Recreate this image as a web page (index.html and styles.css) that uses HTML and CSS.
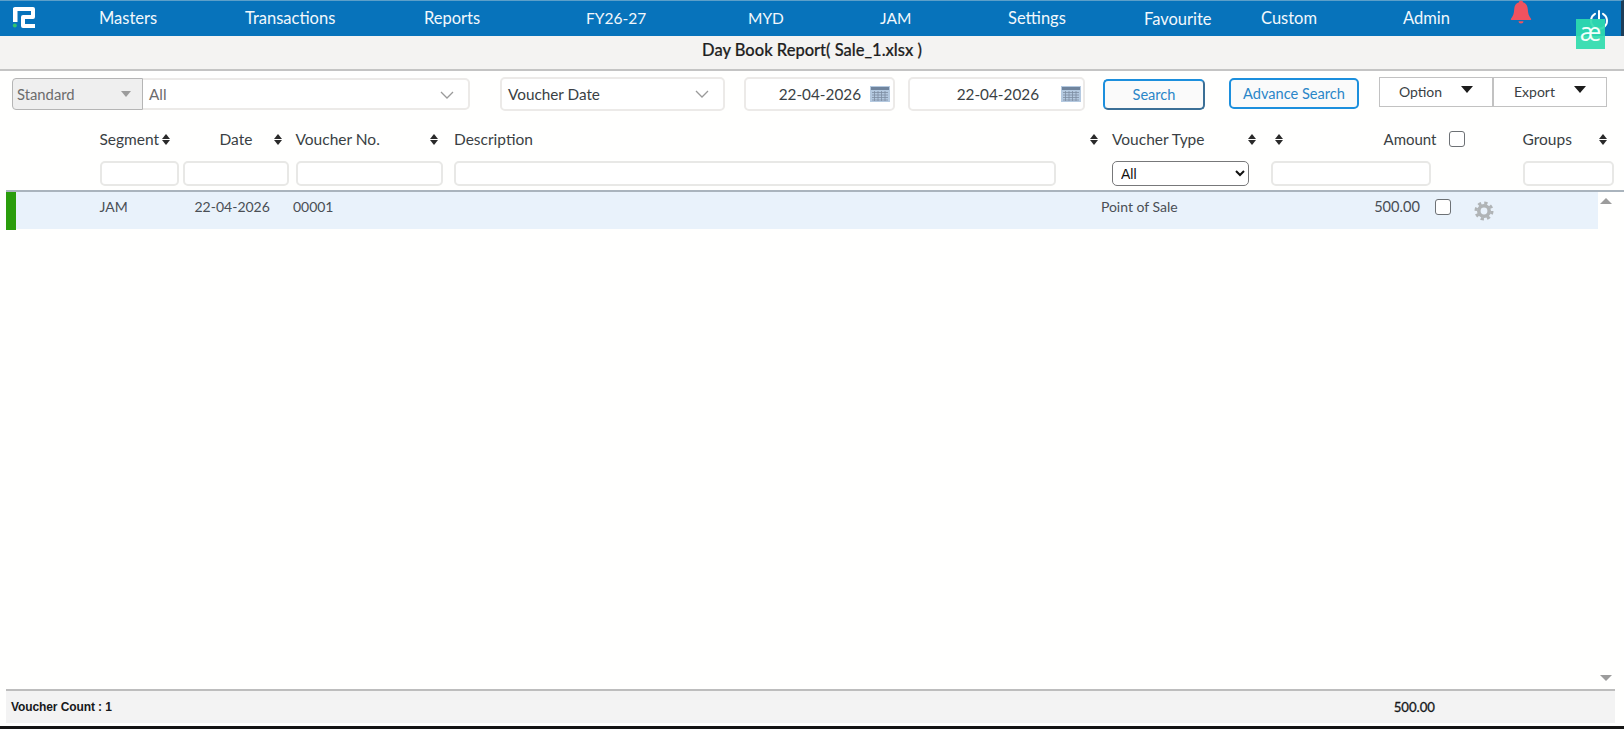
FILE: index.html
```html
<!DOCTYPE html>
<html lang="en">
<head>
    <meta charset="UTF-8">
    <title>Day Book Report</title>
    <link rel="stylesheet" href="styles.css">
</head>
<body>
    <div class="page">
        <nav class="topnav">
            <a class="topnav__logo" href="#">
                <svg width="24" height="24" viewBox="0 0 24 24">
                    <path d="M3 15V3H21V11H11V20H23" fill="none" stroke="#fff" stroke-width="4" stroke-linejoin="round"/>
                    <path d="M1 2H5.500V16H1z" fill="#fff"/>
                    <circle cx="2.800" cy="19.400" r="2" fill="#2fc46f"/>
                </svg>
            </a>
            <a class="topnav__item" href="#">Masters</a>
            <a class="topnav__item" href="#">Transactions</a>
            <a class="topnav__item" href="#">Reports</a>
            <a class="topnav__item topnav__item--caps" href="#">FY26-27</a>
            <a class="topnav__item topnav__item--caps" href="#">MYD</a>
            <a class="topnav__item topnav__item--caps" href="#">JAM</a>
            <a class="topnav__item" href="#">Settings</a>
            <a class="topnav__item topnav__item--low" href="#">Favourite</a>
            <a class="topnav__item" href="#">Custom</a>
            <a class="topnav__item" href="#">Admin</a>
            <span class="topnav__bell">
                <svg width="24" height="24" viewBox="0 0 24 24">
                    <path d="M12 0.5c1.2 0 2 .8 2 1.8 3.2.9 4.6 3.6 4.8 7 .2 4 .9 6.6 3.2 9.4.5.7.2 1.3-.6 1.3H2.600c-.8 0-1.100-.6-.6-1.300 2.300-2.800 3-5.400 3.200-9.400.2-3.400 1.600-6.100 4.800-7 0-1 .8-1.800 2-1.800z" fill="#f0525f"/>
                    <path d="M9.500 21.200h5a2.500 2.300 0 0 1-5 0z" fill="#f0525f"/>
                </svg>
            </span>
            <span class="topnav__power">
                <svg width="20" height="20" viewBox="0 0 20 20" fill="none" stroke="#fff" stroke-width="2" stroke-linecap="round">
                    <path d="M6 3.800a8 8 0 1 0 8 0"/>
                    <path d="M10 1v8"/>
                </svg>
            </span>
            <span class="ae-badge">æ</span>
        </nav>

        <div class="titlebar">Day Book Report( Sale_1.xlsx )</div>

        <div class="filters">
            <div class="picker picker--standard">Standard<i class="tri tri--grey"></i></div>
            <div class="picker picker--all">All
                <svg class="chev" width="14" height="8" viewBox="0 0 14 8"><path d="M1 1l6 6 6-6" fill="none" stroke="#9a9a9a" stroke-width="1.300"/></svg>
            </div>
            <div class="picker picker--date">Voucher Date
                <svg class="chev" width="14" height="8" viewBox="0 0 14 8"><path d="M1 1l6 6 6-6" fill="none" stroke="#9a9a9a" stroke-width="1.300"/></svg>
            </div>
            <div class="datebox datebox--from">22-04-2026
                <svg class="cal" width="20" height="16" viewBox="0 0 20 16">
                    <rect width="20" height="16" fill="#b4c9e0"/>
                    <rect x="1" y="1" width="18" height="3" fill="#6f849d"/>
                    <path d="M2 6.500H18M2 9H18M2 11.500H18M2 14H18M4.500 5V15M8 5V15M11.500 5V15M15 5V15" stroke="#7d8ea2" stroke-width=".8"/>
                </svg>
            </div>
            <div class="datebox datebox--to">22-04-2026
                <svg class="cal" width="20" height="16" viewBox="0 0 20 16">
                    <rect width="20" height="16" fill="#b4c9e0"/>
                    <rect x="1" y="1" width="18" height="3" fill="#6f849d"/>
                    <path d="M2 6.500H18M2 9H18M2 11.500H18M2 14H18M4.500 5V15M8 5V15M11.500 5V15M15 5V15" stroke="#7d8ea2" stroke-width=".8"/>
                </svg>
            </div>
            <button class="btn btn--search">Search</button>
            <button class="btn btn--advance">Advance Search</button>
            <div class="menu-group">
                <button class="menu-btn">Option<i class="tri"></i></button>
                <button class="menu-btn">Export<i class="tri"></i></button>
            </div>
        </div>

        <div class="grid-head">
            <div class="col col--segment">Segment<i class="sort"></i></div>
            <div class="col col--date"><span class="col__label">Date</span><i class="sort"></i></div>
            <div class="col col--number">Voucher No.<i class="sort"></i></div>
            <div class="col col--desc">Description<i class="sort"></i></div>
            <div class="col col--type">Voucher Type<i class="sort"></i></div>
            <div class="col col--amount"><i class="sort"></i><span class="col__right">Amount</span><input class="tick" type="checkbox"></div>
            <div class="col col--groups">Groups<i class="sort"></i></div>
        </div>

        <div class="grid-filter">
            <input class="cell-input cell-input--segment" type="text">
            <input class="cell-input cell-input--date" type="text">
            <input class="cell-input cell-input--number" type="text">
            <input class="cell-input cell-input--desc" type="text">
            <select class="cell-select"><option>All</option></select>
            <input class="cell-input cell-input--amount" type="text">
            <input class="cell-input cell-input--groups" type="text">
        </div>

        <div class="grid-body">
            <div class="rows">
                <div class="row">
                    <i class="row__flag"></i>
                    <span></span>
                    <span>JAM</span>
                    <span>22-04-2026</span>
                    <span>00001</span>
                    <span>Point of Sale</span>
                    <span class="row__amount">500.00</span>
                    <input class="tick" type="checkbox">
                    <svg class="gear" width="20" height="20" viewBox="0 0 20 20">
                        <circle cx="10" cy="10" r="5.200" fill="none" stroke="#b0b4b6" stroke-width="3.600"/>
                        <circle cx="10" cy="10" r="8" fill="none" stroke="#b0b4b6" stroke-width="3" stroke-dasharray="3.280 3"/>
                    </svg>
                </div>
            </div>
            <div class="scroller">
                <i class="scroller__up"></i>
                <i class="scroller__down"></i>
            </div>
        </div>

        <div class="totals">
            <span class="totals__count">Voucher Count : 1</span>
            <span class="totals__amount">500.00</span>
        </div>
        <div class="edge"></div>
    </div>
</body>
</html>
```

FILE: styles.css
```css
* { box-sizing: border-box; }

html, body {
    margin: 0;
    padding: 0;
}

body {
    background: #fffffe;
    color: #3a3f44;
    font-family: Lato, "Open Sans", sans-serif;
    font-size: 14px;
}

i { display: block; }

.page {
    display: flex;
    flex-direction: column;
    height: 729px;
    overflow: hidden;
}

/* top nav */
.topnav {
    position: relative;
    display: grid;
    grid-template-columns: 87px 146px 179px 162px 162px 132px 128px 136px 117px 142px 106px 80px 1fr;
    align-items: center;
    flex: none;
    height: 36px;
    padding: 0 0 1px 12px;
    background: #0773bb;
    border-top: 1px solid #5c9fc9;
    border-right: 3px solid #1d3d58;
}

.topnav__logo {
    display: block;
    height: 24px;
}

.topnav__item {
    color: #f2f8fc;
    font-size: 16.500px;
    text-decoration: none;
}

.topnav__item--caps { font-size: 15.500px; }
.topnav__item--low { padding-top: 2px; }

.topnav__bell {
    height: 24px;
    margin-top: -12px;
}

.topnav__power {
    height: 20px;
    margin-top: 3px;
}

.ae-badge {
    position: absolute;
    left: 1576px;
    top: 18px;
    width: 29px;
    height: 30px;
    background: rgba(47, 220, 174, 0.92);
    color: #f2fffb;
    font-family: "Open Sans", sans-serif;
    font-size: 25px;
    line-height: 25px;
    text-align: center;
}

.titlebar {
    flex: none;
    height: 35px;
    padding-top: 4px;
    background: #f4f3f2;
    border-bottom: 2px solid #c4c4c4;
    color: #1f1f1f;
    font-size: 16.500px;
    font-weight: 500;
    text-align: center;
    -webkit-text-stroke: 0.2px #1f1f1f;
}

/* filters */
.filters {
    display: flex;
    align-items: flex-start;
    flex: none;
    height: 57px;
    padding: 6px 0 0 12px;
}

.picker,
.datebox {
    position: relative;
    display: flex;
    align-items: center;
    height: 34px;
    background: #fff;
    border: 2px solid #eceae8;
    border-radius: 5px;
    font-size: 15.300px;
}

.picker { padding-left: 6px; }

.picker--standard {
    width: 131px;
    height: 32px;
    margin-top: 1px;
    background: #efefef;
    border: 1px solid #b5b5b5;
    border-radius: 4px 0 0 4px;
    padding-left: 4px;
    color: #6c6c6c;
    font-size: 14.800px;
}

.picker--all {
    width: 327px;
    height: 32px;
    margin-top: 1px;
    border-left: none;
    border-radius: 0 5px 5px 0;
    color: #6c6c6c;
}

.picker--date {
    width: 225px;
    margin-left: 30px;
}

.tri {
    width: 0;
    height: 0;
    border-left: 6px solid transparent;
    border-right: 6px solid transparent;
    border-top: 7px solid #1c1c1c;
}

.tri--grey {
    position: absolute;
    left: 108px;
    top: 12px;
    border-left-width: 5px;
    border-right-width: 5px;
    border-top-width: 6px;
    border-top-color: #9c9c9c;
}

.chev {
    position: absolute;
    right: 14px;
    top: 11px;
}

.datebox {
    justify-content: flex-end;
    height: 34px;
    padding-right: 3px;
}

.datebox--from {
    width: 151px;
    margin-left: 19px;
}

.datebox--to {
    width: 177px;
    margin-left: 13px;
    padding-right: 2px;
}

.cal { margin-left: 9px; }
.datebox--to .cal { margin-left: 22px; }

.btn {
    flex: none;
    background: #fafafa;
    border: 2px solid #1c8fdd;
    border-radius: 5px;
    color: #2a86c8;
    font-family: inherit;
    font-size: 14.600px;
    padding: 0;
}

.btn--search {
    width: 102px;
    height: 31px;
    margin: 2px 0 0 18px;
    border-color: #1c8fdd #3b6f96 #3b6f96 #1c8fdd;
}

.btn--advance {
    width: 130px;
    height: 31px;
    margin: 1px 0 0 24px;
    border-color: #1c8fdd;
}

.menu-group {
    display: flex;
    margin-left: 20px;
}

.menu-btn {
    display: flex;
    align-items: center;
    justify-content: center;
    gap: 19px;
    width: 114px;
    height: 30px;
    background: #fff;
    border: 1px solid #c2c2c2;
    color: #3a3f44;
    font-family: inherit;
    font-size: 14px;
    padding: 0 0 2px;
}

.menu-btn .tri { margin-top: -3px; }

/* grid head */
.grid-head,
.grid-filter {
    display: grid;
    grid-template-columns: 82px 113px 158.500px 658px 158.500px 253px 100px;
    flex: none;
    padding-left: 100.500px;
}

.grid-head {
    align-items: center;
    height: 22px;
    font-size: 15.500px;
}

.col {
    display: flex;
    align-items: center;
    justify-content: space-between;
}

.col--segment { padding-right: 12px; margin-left: -1px; }
.col--date { width: 100px; }
.col__label { margin-left: 37px; }
.col--number { padding-right: 2px; width: 145px; }
.col--desc { width: 645px; margin-left: 0; }
.col--type { width: 145px; }

.col--amount {
    justify-content: flex-start;
    padding-left: 4px;
}

.col__right {
    margin-left: auto;
    margin-right: 12px;
    font-size: 15px;
}

.col--amount .tick { margin-right: 59px; }
.col--groups { width: 85px; margin-left: -1px; }

.sort {
    position: relative;
    flex: none;
    width: 9px;
    height: 11px;
}

.sort::before,
.sort::after {
    content: "";
    position: absolute;
    left: 0;
    border-left: 4.500px solid transparent;
    border-right: 4.500px solid transparent;
}

.sort::before {
    top: 0;
    border-bottom: 5px solid #2a2a2a;
}

.sort::after {
    bottom: 0;
    border-top: 5px solid #2a2a2a;
}

.tick {
    appearance: none;
    flex: none;
    width: 16px;
    height: 16px;
    margin: 0;
    background: #fff;
    border: 1px solid #6d7175;
    border-radius: 3px;
}

.grid-filter {
    align-items: start;
    height: 29px;
    margin-top: 11px;
}

.cell-input {
    display: block;
    height: 25px;
    padding: 0;
    background: #fff;
    border: 2px solid #e8e8e6;
    border-radius: 5px;
}

.cell-input--segment { width: 79px; margin-left: -1px; }
.cell-input--date { width: 106px; }
.cell-input--number { width: 147px; }
.cell-input--desc { width: 602px; }
.cell-input--amount { width: 160px; }
.cell-input--groups { width: 91px; margin-left: -1px; }

.cell-select {
    width: 137px;
    height: 25px;
    padding-left: 4px;
    background: #fff;
    border: 1px solid #77787a;
    border-radius: 5px;
    color: #111;
    font-family: "Liberation Sans", sans-serif;
    font-size: 14px;
}

/* grid body */
.grid-body {
    display: flex;
    flex: 1;
    min-height: 0;
    margin-left: 6px;
    border-top: 2px solid #aab4bd;
}

.rows {
    flex: none;
    width: 1592px;
}

.row {
    display: grid;
    grid-template-columns: 10px 83.500px 95px 98.400px 808px 273px 46px 15px 25px 20px;
    align-items: center;
    height: 37px;
    padding-bottom: 9px;
    background: #e9f2fb;
    color: #4a4f55;
    font-size: 14px;
}

.row__flag {
    align-self: stretch;
    margin-bottom: -9px;
    background: #2a9d0c;
}

.row__amount {
    justify-self: end;
    white-space: nowrap;
    font-size: 14.600px;
}

.row .tick { grid-column: 9; }

.gear {
    grid-column: 10;
    margin: 9px 0 0 14px;
}

.scroller {
    position: relative;
    flex: 1;
}

.scroller__up,
.scroller__down {
    position: absolute;
    left: 2px;
    border-left: 6px solid transparent;
    border-right: 6px solid transparent;
}

.scroller__up {
    top: 6px;
    border-bottom: 6px solid #9c9c9c;
}

.scroller__down {
    bottom: 8px;
    border-top: 6px solid #9c9c9c;
}

/* totals */
.totals {
    display: flex;
    align-items: center;
    flex: none;
    justify-content: space-between;
    width: 1609px;
    height: 34px;
    margin-left: 6px;
    padding: 0 180px 0 5px;
    background: #f3f3f3;
    border-top: 2px solid #bdbdbd;
    color: #17191b;
    font-size: 12px;
    font-weight: 700;
}

.totals__count { font-family: "Liberation Sans", sans-serif; letter-spacing: -0.1px; }
.totals__amount { font-size: 13.200px; font-weight: 400; -webkit-text-stroke: 0.3px #17191b; }

.edge {
    flex: none;
    height: 3px;
    margin-top: 3px;
    background: #141414;
}
```
